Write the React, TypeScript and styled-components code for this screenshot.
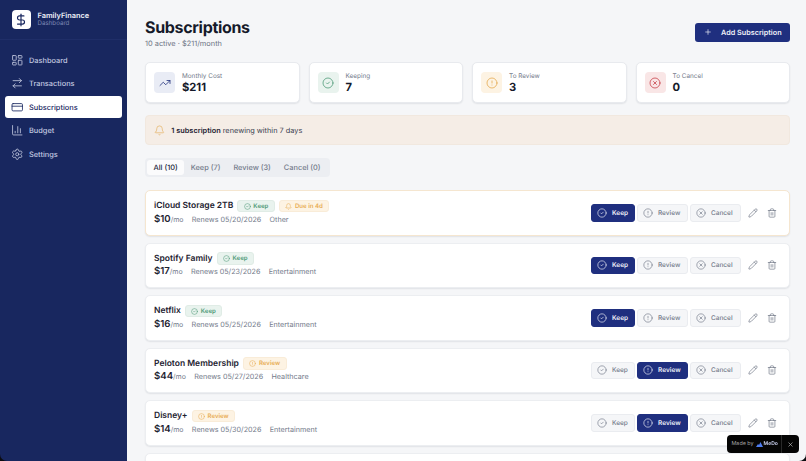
import React from 'react';
import styled, { createGlobalStyle } from 'styled-components';
import {
  Bell,
  ChartColumn,
  CircleAlert,
  CircleCheck,
  CircleX,
  CreditCard,
  DollarSign,
  LayoutDashboard,
  Pencil,
  Plus,
  Settings,
  Trash2,
  TrendingUp,
  ArrowRightLeft,
  X,
} from 'lucide-react';

type Status = 'keep' | 'review' | 'cancel';

const navItems = [
  { label: 'Dashboard', icon: LayoutDashboard },
  { label: 'Transactions', icon: ArrowRightLeft },
  { label: 'Subscriptions', icon: CreditCard, active: true },
  { label: 'Budget', icon: ChartColumn },
  { label: 'Settings', icon: Settings },
];

const stats = [
  { label: 'Monthly Cost', value: '$211', icon: TrendingUp, bg: '#e9ecf5', fg: '#1e2f7a' },
  { label: 'Keeping', value: '7', icon: CircleCheck, bg: '#e9f3ee', fg: '#4f9a78' },
  { label: 'To Review', value: '3', icon: CircleAlert, bg: '#fdf3e3', fg: '#e5a94f' },
  { label: 'To Cancel', value: '0', icon: CircleX, bg: '#f9e6e6', fg: '#c8424a' },
];

const subs: { name: string; price: number; date: string; cat: string; status: Status; due?: string }[] = [
  { name: 'iCloud Storage 2TB', price: 10, date: '05/20/2026', cat: 'Other', status: 'keep', due: 'Due in 4d' },
  { name: 'Spotify Family', price: 17, date: '05/23/2026', cat: 'Entertainment', status: 'keep' },
  { name: 'Netflix', price: 16, date: '05/25/2026', cat: 'Entertainment', status: 'keep' },
  { name: 'Peloton Membership', price: 44, date: '05/27/2026', cat: 'Healthcare', status: 'review' },
  { name: 'Disney+', price: 14, date: '05/30/2026', cat: 'Entertainment', status: 'review' },
];

const actions: { key: Status; label: string; icon: typeof CircleCheck; w: number }[] = [
  { key: 'keep', label: 'Keep', icon: CircleCheck, w: 44 },
  { key: 'review', label: 'Review', icon: CircleAlert, w: 51 },
  { key: 'cancel', label: 'Cancel', icon: CircleX, w: 51 },
];

const GlobalStyle = createGlobalStyle`
  html, body {
    margin: 0;
    height: 100%;
    background: #f5f6f8;
    font-family: Inter, "Liberation Sans", sans-serif;
    text-rendering: geometricPrecision;
    overflow: hidden;
  }
  * { box-sizing: border-box; }
`;

const Layout = styled.div`
  display: flex;
  height: 100vh;
  overflow: hidden;
`;

const Sidebar = styled.aside`
  width: 127px;
  flex-shrink: 0;
  background: #18275f;
`;

const Brand = styled.div`
  height: 40px;
  padding: 9px 11.5px;
  display: flex;
  align-items: center;
  gap: 6.5px;
  border-bottom: 1px solid #1f2e68;
`;

const BrandIcon = styled.div`
  width: 19.5px;
  height: 19.5px;
  border-radius: 4px;
  background: #fff;
  color: #18275f;
  display: flex;
  align-items: center;
  justify-content: center;
`;

const BrandName = styled.div`
  font-size: 7.4px;
  font-weight: 600;
  line-height: 9.5px;
  color: #eef0f8;
`;

const BrandSub = styled.div`
  font-size: 6.2px;
  line-height: 8px;
  color: #7f8ab5;
`;

const Nav = styled.nav`
  padding: 9.25px 5px;
  display: flex;
  flex-direction: column;
  gap: 2px;
`;

const NavItem = styled.div<{ $active?: boolean }>`
  height: 21.5px;
  padding: 0 5.7px;
  display: flex;
  align-items: center;
  gap: 5.8px;
  border-radius: 3px;
  font-size: 7.4px;
  font-weight: 500;
  background: ${(p) => (p.$active ? '#fff' : 'transparent')};
  color: ${(p) => (p.$active ? '#18275f' : '#c3c9e0')};
`;

const Main = styled.main`
  flex: 1;
  min-width: 0;
  padding: 16.5px 16px 0 18px;
`;

const PageHead = styled.header`
  display: flex;
  justify-content: space-between;
  align-items: flex-start;
  height: 45.5px;
`;

const Title = styled.h1`
  margin: 0;
  font-size: 16px;
  letter-spacing: -0.32px;
  line-height: 20px;
  font-weight: 700;
  color: #151a2a;
`;

const Subtitle = styled.div`
  margin-top: 2px;
  font-size: 7.4px;
  line-height: 10px;
  color: #6d7484;
`;

const AddButton = styled.button`
  margin-top: 6px;
  width: 95px;
  height: 19.5px;
  padding: 0 0 0 9px;
  display: flex;
  align-items: center;
  gap: 9px;
  border: 0;
  border-radius: 3px;
  background: #1f2f7f;
  color: #eef0f8;
  font-family: inherit;
  font-size: 7.25px;
  font-weight: 600;
  text-rendering: geometricPrecision;
`;

const StatGrid = styled.section`
  display: grid;
  grid-template-columns: repeat(4, 1fr);
  gap: 9px;
`;

const StatCard = styled.div`
  height: 41px;
  padding: 0 8px;
  display: flex;
  align-items: center;
  gap: 7px;
  background: #fff;
  border: 1px solid #e8eaee;
  border-radius: 5px;
  box-shadow: 0 1px 1.5px rgba(20, 30, 60, 0.09);
`;

const StatIcon = styled.div<{ $bg: string; $fg: string }>`
  width: 21px;
  height: 21px;
  border-radius: 4px;
  background: ${(p) => p.$bg};
  color: ${(p) => p.$fg};
  display: flex;
  align-items: center;
  justify-content: center;
`;

const StatLabel = styled.div`
  font-size: 6.4px;
  line-height: 8px;
  color: #737a8a;
`;

const StatValue = styled.div`
  margin-top: 1px;
  font-size: 11.2px;
  line-height: 13px;
  font-weight: 700;
  color: #151a2a;
`;

const Alert = styled.div`
  margin-top: 12px;
  height: 30px;
  padding: 0 7.5px;
  display: flex;
  align-items: center;
  gap: 6.8px;
  background: #f5ede6;
  border: 1px solid #f1e8df;
  border-radius: 4px;
  color: #e5b468;
  font-size: 7.35px;
`;

const AlertText = styled.span`
  color: #3b4150;
  b {
    font-weight: 600;
    color: #1d2230;
  }
`;

const Tabs = styled.div`
  margin-top: 12.5px;
  width: 185px;
  height: 19px;
  padding: 2px;
  display: flex;
  background: #eceef2;
  border-radius: 4px;
`;

const Tab = styled.div<{ $active?: boolean }>`
  padding: 0 6.5px;
  display: flex;
  align-items: center;
  border-radius: 3px;
  font-size: 7.4px;
  font-weight: 500;
  white-space: nowrap;
  background: ${(p) => (p.$active ? '#fbfbfc' : 'transparent')};
  color: ${(p) => (p.$active ? '#20263a' : '#737a8a')};
`;

const List = styled.section`
  margin-top: 13.5px;
  display: flex;
  flex-direction: column;
  gap: 7px;
`;

const Row = styled.article<{ $due?: boolean }>`
  flex-shrink: 0;
  height: 45.5px;
  padding: 0 8.5px 1px 8px;
  display: flex;
  align-items: center;
  justify-content: space-between;
  background: #fff;
  border: 1px solid ${(p) => (p.$due ? '#f5e6d0' : '#eceef1')};
  border-radius: 5px;
  box-shadow: 0 1px 1.5px rgba(20, 30, 60, 0.09);
`;

const RowTop = styled.div`
  display: flex;
  align-items: center;
  gap: 4px;
`;

const RowName = styled.div`
  font-size: 8.5px;
  font-weight: 600;
  color: #1d2230;
`;

const Tag = styled.span<{ $tone: 'keep' | 'warn' }>`
  height: 12.5px;
  padding: 0 5.5px;
  display: inline-flex;
  align-items: center;
  gap: 2.5px;
  border-radius: 3px;
  font-size: 6.1px;
  font-weight: 600;
  background: ${(p) => (p.$tone === 'keep' ? '#e9f3ee' : '#fdf3e3')};
  border: 1px solid ${(p) => (p.$tone === 'keep' ? '#e0ece6' : '#f9ecd8')};
  color: ${(p) => (p.$tone === 'keep' ? '#4f9a78' : '#e8ad55')};
`;

const RowMeta = styled.div`
  margin-top: 1.5px;
  display: flex;
  align-items: baseline;
  gap: 8.3px;
  font-size: 7.2px;
  line-height: 11px;
  color: #737a8a;
`;

const Price = styled.span`
  font-size: 9.6px;
  font-weight: 600;
  color: #1d2230;
  small {
    font-size: 7px;
    font-weight: 400;
    color: #737a8a;
  }
`;

const Controls = styled.div`
  margin-bottom: -1px;
  display: flex;
  align-items: center;
  gap: 2px;
`;

const ActionButton = styled.button<{ $on: boolean; $w: number }>`
  width: ${(p) => p.$w}px;
  height: 17.5px;
  padding: 0 0 0 5px;
  display: flex;
  align-items: center;
  gap: 5.5px;
  border-radius: 3px;
  border: 1px solid ${(p) => (p.$on ? '#1f2f7f' : '#eaecf0')};
  background: ${(p) => (p.$on ? '#1f2f7f' : '#f5f6f8')};
  color: ${(p) => (p.$on ? '#eef0f8' : '#737a8a')};
  font-family: inherit;
  font-size: 6.5px;
  font-weight: ${(p) => (p.$on ? 600 : 500)};
  text-rendering: geometricPrecision;
`;

const IconActions = styled.div`
  margin-left: 2px;
  display: flex;
  gap: 2px;
`;

const IconButton = styled.button`
  padding: 0;
  width: 17px;
  height: 17px;
  display: flex;
  align-items: center;
  justify-content: center;
  border: 0;
  background: none;
  color: #6d7484;
`;

const MadeBy = styled.div`
  position: fixed;
  right: 7px;
  bottom: 8px;
  width: 72px;
  height: 18px;
  display: flex;
  align-items: center;
  background: #050505;
  border-radius: 4px;
  font-size: 5.4px;
  white-space: nowrap;
  color: #a3a3a3;
`;

const MadeLabel = styled.div`
  flex: 1;
  padding-left: 4.5px;
  display: flex;
  align-items: center;
  gap: 2px;
`;

const MadeBrand = styled.span`
  display: flex;
  align-items: center;
  gap: 1px;
  font-size: 5px;
  font-weight: 600;
  color: #cfd6f5;
`;

const MadeClose = styled.div`
  width: 18px;
  height: 100%;
  display: flex;
  align-items: center;
  justify-content: center;
  border-left: 1px solid #2a2a2a;
  color: #d0d0d0;
`;

const WindowEdge = styled.div`
  position: fixed;
  inset: 0;
  border-radius: 0 0 7px 7px;
  box-shadow: 0 0 0 8px #0c0c10;
  pointer-events: none;
`;

export default function App() {
  return (
    <Layout>
      <GlobalStyle />
      <Sidebar>
        <Brand>
          <BrandIcon>
            <DollarSign size={14} strokeWidth={2} />
          </BrandIcon>
          <div>
            <BrandName>FamilyFinance</BrandName>
            <BrandSub>Dashboard</BrandSub>
          </div>
        </Brand>
        <Nav>
          {navItems.map((item) => (
            <NavItem key={item.label} $active={item.active}>
              <item.icon size={12.5} strokeWidth={1.6} />
              {item.label}
            </NavItem>
          ))}
        </Nav>
      </Sidebar>
      <Main>
        <PageHead>
          <div>
            <Title>Subscriptions</Title>
            <Subtitle>10 active · $211/month</Subtitle>
          </div>
          <AddButton>
            <Plus size={8} strokeWidth={2} />
            Add Subscription
          </AddButton>
        </PageHead>
        <StatGrid>
          {stats.map((s) => (
            <StatCard key={s.label}>
              <StatIcon $bg={s.bg} $fg={s.fg}>
                <s.icon size={12} strokeWidth={1.6} />
              </StatIcon>
              <div>
                <StatLabel>{s.label}</StatLabel>
                <StatValue>{s.value}</StatValue>
              </div>
            </StatCard>
          ))}
        </StatGrid>
        <Alert>
          <Bell size={11} strokeWidth={1.6} />
          <AlertText>
            <b>1 subscription</b> renewing within 7 days
          </AlertText>
        </Alert>
        <Tabs>
          <Tab $active>All (10)</Tab>
          <Tab>Keep (7)</Tab>
          <Tab>Review (3)</Tab>
          <Tab>Cancel (0)</Tab>
        </Tabs>
        <List>
          {subs.map((sub) => (
            <Row key={sub.name} $due={!!sub.due}>
              <div>
                <RowTop>
                  <RowName>{sub.name}</RowName>
                  {sub.status === 'keep' ? (
                    <Tag $tone="keep">
                      <CircleCheck size={7} strokeWidth={1.8} />
                      Keep
                    </Tag>
                  ) : (
                    <Tag $tone="warn">
                      <CircleAlert size={7} strokeWidth={1.8} />
                      Review
                    </Tag>
                  )}
                  {sub.due && (
                    <Tag $tone="warn">
                      <Bell size={7} strokeWidth={1.8} />
                      {sub.due}
                    </Tag>
                  )}
                </RowTop>
                <RowMeta>
                  <Price>
                    ${sub.price}
                    <small>/mo</small>
                  </Price>
                  <span>Renews {sub.date}</span>
                  <span>{sub.cat}</span>
                </RowMeta>
              </div>
              <Controls>
                {actions.map((a) => (
                  <ActionButton key={a.key} $on={sub.status === a.key} $w={a.w}>
                    <a.icon size={10} strokeWidth={1.6} />
                    {a.label}
                  </ActionButton>
                ))}
                <IconActions>
                  <IconButton>
                    <Pencil size={10} strokeWidth={1.6} />
                  </IconButton>
                  <IconButton>
                    <Trash2 size={10} strokeWidth={1.6} />
                  </IconButton>
                </IconActions>
              </Controls>
            </Row>
          ))}
          <Row />
        </List>
      </Main>
      <MadeBy>
        <MadeLabel>
          Made by
          <MadeBrand>
            <svg width="7" height="5" viewBox="0 0 14 10">
              <path d="M0 10 L4 4 L6 6 L9 0 L14 10 Z" fill="#4f7df0" />
            </svg>
            MeDo
          </MadeBrand>
        </MadeLabel>
        <MadeClose>
          <X size={7} strokeWidth={2} />
        </MadeClose>
      </MadeBy>
      <WindowEdge />
    </Layout>
  );
}
